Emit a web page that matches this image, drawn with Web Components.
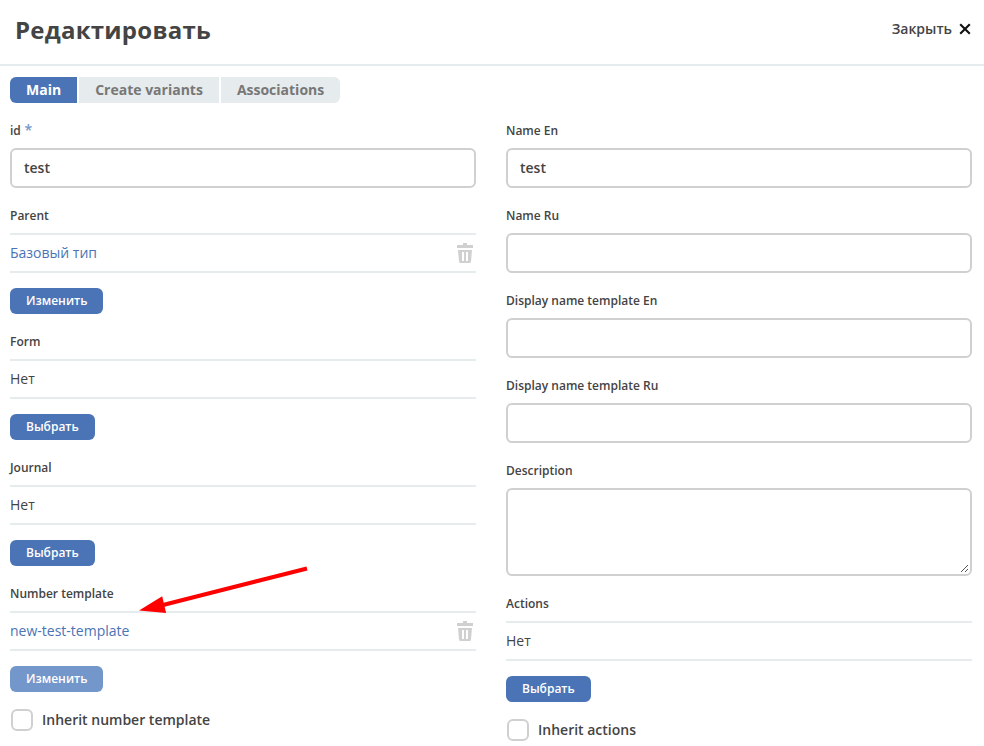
<!DOCTYPE html>
<html lang="ru">
<head>
<meta charset="utf-8">
<title>Редактировать</title>
<style>
body { margin: 0; background: #fff; color: #444; font: 400 14px/20px "Open Sans", "Noto Sans", sans-serif; }
</style>
</head>
<body>
<edit-dialog></edit-dialog>
<script>
const define = (name, html, setup) => customElements.define(name, class extends HTMLElement {
  connectedCallback() {
    if (this.shadowRoot) return;
    const t = document.createElement('template');
    t.innerHTML = html;
    this.attachShadow({ mode: 'open' }).append(t.content.cloneNode(true));
    if (setup) setup(this, this.shadowRoot);
  }
});

define('dialog-header', `
<style>
:host { display: flex; justify-content: space-between; height: 64px; border-bottom: 2px solid #e6ebed; padding: 0 13px 0 15px; }
h1 { margin: 13px 0 0; font-size: 24px; line-height: 33px; font-weight: 700; letter-spacing: .25px; }
.close { display: flex; align-items: center; gap: 7px; height: 20px; margin-top: 19px; font-weight: 600; }
svg { display: block; }
</style>
<h1><slot></slot></h1>
<div class="close"><span>Закрыть</span>
<svg width="12" height="12" viewBox="0 0 12 12"><path d="M1.200 1.200 10.800 10.800M10.800 1.200 1.200 10.800" stroke="#111" stroke-width="2.100" fill="none"/></svg></div>`);

define('tab-item', `
<style>
:host { display: block; height: 26px; padding: 0 16px; line-height: 26px; font-weight: 700; color: #777; background: #e6ebed; }
:host([active]) { color: #fff; background: #4a74b5; }
:host(:first-of-type) { border-radius: 6px 0 0 6px; }
:host(:last-of-type) { border-radius: 0 6px 6px 0; }
</style><slot></slot>`);

define('tab-bar', `
<style>:host { display: flex; gap: 2px; padding: 11px 10px 17px; }</style><slot></slot>`);

define('form-field', `
<style>
:host { display: block; margin-bottom: 17px; }
.label { height: 20px; line-height: 21px; margin-bottom: 8px; font-size: 12px; font-weight: 600; }
.label b { color: #7396cd; font-size: 14px; line-height: 18px; font-weight: 600; }
</style>
<div class="label"><span></span></div><slot></slot>`, (el, root) => {
  root.querySelector('span').textContent = el.getAttribute('label');
  if (el.hasAttribute('required')) {
    const b = document.createElement('b');
    b.textContent = ' *';
    root.querySelector('.label').append(b);
  }
});

define('text-box', `
<style>
:host { display: block; box-sizing: border-box; height: 40px; border: 2px solid #d0d0d0; border-radius: 6px; padding: 8px 12px; font-weight: 600; }
:host([multiline]) { height: 88px; padding: 0; display: flex; justify-content: flex-end; align-items: flex-end; }
svg { display: none; }
:host([multiline]) svg { display: block; }
</style><slot></slot>
<svg width="9" height="10" viewBox="0 0 9 10" shape-rendering="crispEdges"><path d="M0 7h1v-1h1v-1h1v-1h1v-1h1v-1h1v-1h1v1h-1v1h-1v1h-1v1h-1v1h-1v1h-1v1h-1zM4 7h1v-1h1v-1h1v1h-1v1h-1v1h-1z" fill="#555"/></svg>`);

define('trash-icon', `
<style>:host { display: block; width: 16px; height: 20px; } svg { display: block; }</style>
<svg width="16" height="20" viewBox="0 0 16 20"><path fill="#d0d0d0" fill-rule="evenodd" d="M6 0h4v2h6v3H0V2h6zM1 7h14l-1 11.500q-.2 1.500-1.500 1.500h-9Q2.200 20 2 18.500zM5 9v9h2V9zM9 9v9h2V9z"/></svg>`);

define('push-button', `
<style>
:host { display: block; width: fit-content; height: 26px; padding: 0 16px; border-radius: 6px; background: #4a74b5; color: #fff; font-size: 12px; line-height: 25px; font-weight: 600; }
:host([faded]) { background: #7396cb; }
</style><slot></slot>`);

define('select-journal', `
<style>
.row { display: flex; justify-content: space-between; box-sizing: border-box; height: 40px; border: solid #e6ebed; border-width: 2px 0; padding: 8px 3px 8px 0; margin-bottom: 15px; }
:host { display: block; }
:host([linked]) .value { color: #4a74b5; }
</style>
<div class="row"><span class="value"><slot></slot></span></div><push-button></push-button>`, (el, root) => {
  root.querySelector('push-button').textContent = el.hasAttribute('linked') ? 'Изменить' : 'Выбрать';
  root.querySelector('push-button').toggleAttribute('faded', el.hasAttribute('faded'));
  if (el.hasAttribute('linked')) root.querySelector('.row').append(document.createElement('trash-icon'));
});

define('check-option', `
<style>
:host { display: flex; align-items: center; gap: 9px; padding-left: 1px; height: 22px; font-weight: 600; }
i { box-sizing: border-box; width: 22px; height: 22px; border: 2px solid #d0d0d0; border-radius: 6px; }
</style><i></i><span><slot></slot></span>`);

define('pointer-arrow', `
<style>:host { position: absolute; left: 138px; top: 564px; } svg { display: block; }</style>
<svg width="172" height="52" viewBox="0 0 172 52"><path d="M169 4.500 25 41" stroke="#f00" stroke-width="4"/><path d="M1 46.600 24.200 32.200 28.100 49.100z" fill="#f00"/></svg>`);

define('edit-dialog', `
<style>
:host { display: block; position: relative; height: 746px; overflow: hidden; }
main { display: grid; grid-template-columns: 1fr 1fr; gap: 30px; padding: 0 12px 0 10px; }
</style>
<dialog-header>Редактировать</dialog-header>
<tab-bar><tab-item active>Main</tab-item><tab-item>Create variants</tab-item><tab-item>Associations</tab-item></tab-bar>
<main>
<section>
<form-field label="id" required><text-box>test</text-box></form-field>
<form-field label="Parent"><select-journal linked>Базовый тип</select-journal></form-field>
<form-field label="Form"><select-journal>Нет</select-journal></form-field>
<form-field label="Journal"><select-journal>Нет</select-journal></form-field>
<form-field label="Number template"><select-journal linked faded>new-test-template</select-journal></form-field>
<check-option>Inherit number template</check-option>
</section>
<section>
<form-field label="Name En"><text-box>test</text-box></form-field>
<form-field label="Name Ru"><text-box></text-box></form-field>
<form-field label="Display name template En"><text-box></text-box></form-field>
<form-field label="Display name template Ru"><text-box></text-box></form-field>
<form-field label="Description"><text-box multiline></text-box></form-field>
<form-field label="Actions"><select-journal>Нет</select-journal></form-field>
<check-option>Inherit actions</check-option>
</section>
</main>
<pointer-arrow></pointer-arrow>`);
</script>
</body>
</html>
